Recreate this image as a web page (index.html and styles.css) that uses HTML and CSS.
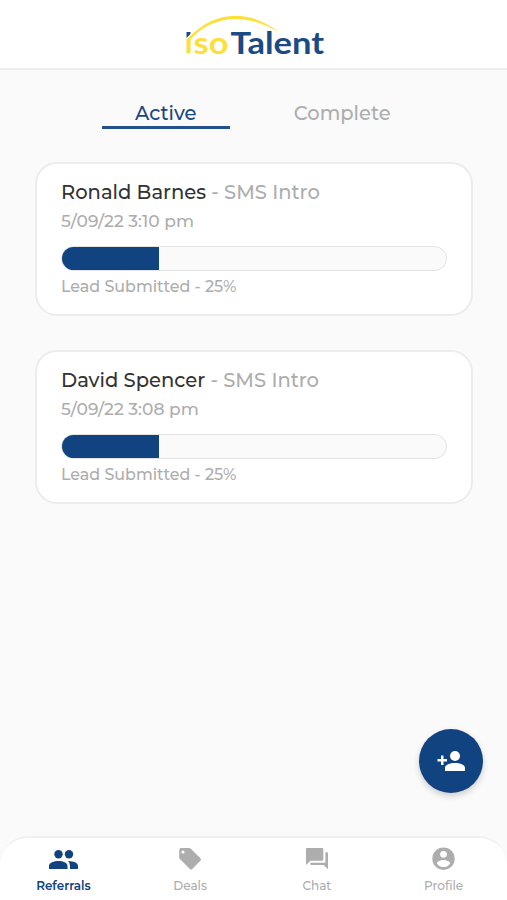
FILE: index.html
```html
<!DOCTYPE html>
<html lang="en">
<head>
<meta charset="utf-8">
<meta name="viewport" content="width=device-width, initial-scale=1">
<title>isoTalent</title>
<link rel="stylesheet" href="styles.css">
</head>
<body>
<div class="app">
  <header class="header">
    <svg class="logo" viewBox="0 0 144 44" role="img" aria-label="isoTalent">
      <path class="logo-arc" d="M4.500 30C31 0 66 -2 97.500 22.500C66 4 34 3 8.500 29Z"/>
      <path class="logo-gold" d="M4.500 29.500L8.500 27V43.500H4.500Z"/>
      <path class="logo-navy" d="M4.500 22H8.500V24L4.500 28Z"/>
      <text class="logo-text logo-gold" x="11.500" y="43.500" textLength="35" lengthAdjust="spacingAndGlyphs">so</text>
      <text class="logo-text logo-navy" x="48.500" y="43.500" textLength="93.500" lengthAdjust="spacingAndGlyphs">Talent</text>
    </svg>
  </header>
  <main class="content">
    <nav class="tabs">
      <a class="tab tab-active">Active</a>
      <a class="tab">Complete</a>
    </nav>
    <section class="cards">
      <article class="card">
        <h2 class="title"><span class="name">Ronald Barnes</span> <span class="source">- SMS Intro</span></h2>
        <p class="date">5/09/22 3:10 pm</p>
        <div class="progress"><div class="fill"></div></div>
        <p class="status">Lead Submitted - 25%</p>
      </article>
      <article class="card">
        <h2 class="title"><span class="name">David Spencer</span> <span class="source">- SMS Intro</span></h2>
        <p class="date">5/09/22 3:08 pm</p>
        <div class="progress"><div class="fill"></div></div>
        <p class="status">Lead Submitted - 25%</p>
      </article>
    </section>
  </main>
  <button class="fab" aria-label="Add referral">
    <svg viewBox="0 0 28 20"><circle cx="18" cy="5" r="5"/><path d="M8 20V17C8 13.500 13 12 18 12S28 13.500 28 17V20ZM4 4.500H6.500V8H10V10.500H6.500V14H4V10.500H.500V8H4Z"/></svg>
  </button>
  <nav class="bottom-nav">
    <a class="item item-active">
      <svg viewBox="0 0 30 24"><circle cx="10.500" cy="7.300" r="4.200"/><circle cx="21" cy="7.300" r="4.200"/><path d="M1 22V19C1 15.500 6 14 10.500 14S19.500 15.500 19.500 19V22ZM20 14.100C25.500 14.300 30 15.900 30 19V22H22V19Q22 16 20 14.100Z"/></svg>
      <span>Referrals</span>
    </a>
    <a class="item">
      <svg viewBox="0 0 30 24"><path fill-rule="evenodd" d="M6.300 1H14Q15 1 15.800 1.800L25.400 11.300Q26.600 12.500 25.400 13.700L17.300 21.900Q16.100 23 14.900 21.900L4.900 12Q4.200 11.200 4.200 10.200V3.200Q4.200 1 6.300 1ZM8 3.400A1.600 1.600 0 1 0 8 6.600A1.600 1.600 0 1 0 8 3.400Z"/></svg>
      <span>Deals</span>
    </a>
    <a class="item">
      <svg viewBox="0 0 30 24"><path d="M5 1H20.200Q21.300 1 21.300 2V12.600Q21.300 13.700 20.200 13.700H8.500L4 18V2Q4 1 5 1ZM23.400 5.300H25Q26 5.300 26 6.400V22.200L21.700 18H9.300Q8.300 18 8.300 17V15.700H23.400Z"/></svg>
      <span>Chat</span>
    </a>
    <a class="item">
      <svg viewBox="0 0 30 24"><path fill-rule="evenodd" d="M14.500 .500A11.200 11.200 0 1 1 14.500 22.900A11.200 11.200 0 1 1 14.500 .500ZM14.500 3.900A3.400 3.400 0 1 0 14.500 10.700A3.400 3.400 0 1 0 14.500 3.900ZM7.800 16.500C9.500 19 11.700 20.100 14.500 20.100S19.500 19 21.200 16.500C21.100 14.300 16.800 13.100 14.500 13.100S7.900 14.300 7.800 16.500Z"/></svg>
      <span>Profile</span>
    </a>
  </nav>
</div>
</body>
</html>
```
FILE: styles.css
```css
* { box-sizing: border-box; }
body { margin: 0; font-family: Montserrat, Inter, sans-serif; font-weight: 500; background: #fafafa; color: #333; }
.app { position: relative; display: flex; flex-direction: column; height: 900px; overflow: hidden; }
.header { flex: none; height: 70px; display: flex; justify-content: center; padding-top: 10px; background: #fff; border-bottom: 2px solid #ececec; }
.logo { width: 144px; height: 44px; overflow: visible; }
.logo-arc, .logo-gold { fill: #fddf3a; }
.logo-navy { fill: #1b4a84; }
.logo-text { font: 700 30px Lato, sans-serif; }
.content { flex: 1; padding: 26px 34px 0 35px; }
.tabs { display: flex; justify-content: center; gap: 49px; }
.tab { width: 127.500px; height: 33px; text-align: center; font-size: 19.500px; line-height: 34px; color: #adadad; border-bottom: 3px solid transparent; }
.tab-active { color: #1a4784; border-color: #24508c; }
.cards { display: flex; flex-direction: column; gap: 34px; margin-top: 33px; }
.card { height: 154px; padding: 15px 24px 0; background: #fff; border: 2px solid #ececec; border-radius: 22px; }
.title, .date, .status { margin: 0; font-weight: 500; white-space: nowrap; }
.title { font-size: 19.550px; line-height: 26px; }
.source { color: #adadad; }
.date { margin-top: 4px; font-size: 17.100px; line-height: 24px; color: #adadad; }
.progress { margin-top: 13px; height: 25px; overflow: hidden; background: #fafafa; border: 1px solid #e3e3e3; border-radius: 13px; }
.fill { width: 97px; height: 100%; background: #10437f; }
.status { margin-top: 6px; font-size: 15.900px; line-height: 20px; color: #adadad; }
.fab { position: absolute; right: 24.500px; top: 728.500px; width: 64px; height: 64px; padding: 0; display: grid; place-items: center; border: 0; border-radius: 50%; background: #10437f; box-shadow: 0 3px 6px rgba(0,0,0,.18); }
.fab svg { width: 28px; height: 20px; fill: #fff; }
.bottom-nav { flex: none; height: 64px; display: grid; grid-template-columns: repeat(4, 1fr); padding: 9px 0 0; background: #fff; border-top: 2px solid #f0f0f0; border-radius: 28px 28px 0 0; }
.item { display: flex; flex-direction: column; align-items: center; color: #adadad; font-size: 12px; line-height: 16px; }
.item svg { width: 30px; height: 24px; fill: currentColor; }
.item span { margin-top: 7px; }
.item-active { color: #10437f; font-weight: 600; }
```
